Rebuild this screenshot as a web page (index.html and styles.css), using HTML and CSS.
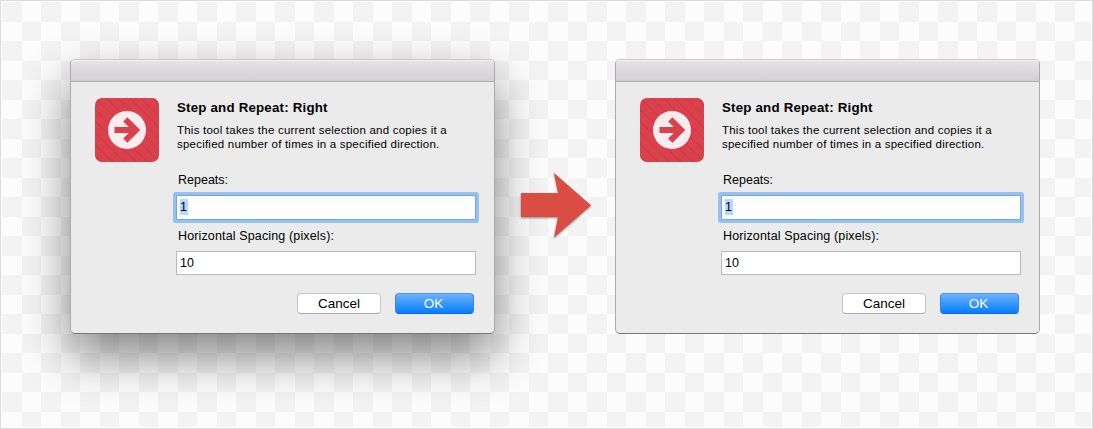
FILE: index.html
```html
<!DOCTYPE html>
<html lang="en">
<head>
<meta charset="utf-8">
<title>Step and Repeat</title>
<link rel="stylesheet" href="styles.css">
</head>
<body>
<svg width="0" height="0" class="defs">
  <defs>
    <pattern id="stripes" width="11.5" height="11.5" patternUnits="userSpaceOnUse">
      <path d="M-2 -2L13.5 13.5M-2 9.5L2 13.5M9.5 -2L13.5 2" stroke="#c83b46" stroke-width="1"/>
    </pattern>
    <symbol id="tool-icon" viewBox="0 0 64 64">
      <rect width="64" height="64" rx="7" fill="#da414c"/>
      <rect width="64" height="64" rx="7" fill="url(#stripes)"/>
      <circle cx="32" cy="32" r="19" fill="#fcecee"/>
      <path d="M19.5 32H40M30.3 21.3L41 32L30.3 42.7" fill="none" stroke="#da414c" stroke-width="6"/>
    </symbol>
  </defs>
</svg>
<main class="stage">
  <section class="dialog dialog-shadow">
    <div class="titlebar"></div>
    <div class="content">
      <svg class="icon" width="64" height="64"><use href="#tool-icon"/></svg>
      <div class="form">
        <h1 class="heading">Step and Repeat: Right</h1>
        <p class="desc">This tool takes the current selection and copies it a<br>specified number of times in a specified direction.</p>
        <div class="label repeats">Repeats:</div>
        <div class="field focused"><span class="selected">1</span></div>
        <div class="label spacing">Horizontal Spacing (pixels):</div>
        <div class="field">10</div>
        <div class="buttons"><div class="button cancel">Cancel</div><div class="button ok">OK</div></div>
      </div>
    </div>
  </section>
  <svg class="arrow" width="74" height="70" viewBox="0 0 74 70"><path d="M2 23H39L35 3L72 35.3L35 67.5L39 47H2Z" fill="#d94d43"/></svg>
  <section class="dialog">
    <div class="titlebar"></div>
    <div class="content">
      <svg class="icon" width="64" height="64"><use href="#tool-icon"/></svg>
      <div class="form">
        <h1 class="heading">Step and Repeat: Right</h1>
        <p class="desc">This tool takes the current selection and copies it a<br>specified number of times in a specified direction.</p>
        <div class="label repeats">Repeats:</div>
        <div class="field focused"><span class="selected">1</span></div>
        <div class="label spacing">Horizontal Spacing (pixels):</div>
        <div class="field">10</div>
        <div class="buttons"><div class="button cancel">Cancel</div><div class="button ok">OK</div></div>
      </div>
    </div>
  </section>
</main>
</body>
</html>
```
FILE: styles.css
```css
* { box-sizing: border-box; }
body { margin: 0; font-family: "Liberation Sans", Arial, sans-serif; color: #000; }
.defs { position: absolute; }
.stage {
  width: 1093px;
  height: 429px;
  border: 1px solid #dcdcdc;
  padding: 58px 0 0 69px;
  display: flex;
  align-items: flex-start;
  overflow: hidden;
  background:
    linear-gradient(#fff, #fff) 0 0 / 100% 1px no-repeat,
    linear-gradient(#fff, #fff) 0 0 / 1px 100% no-repeat,
    linear-gradient(#fff, #fff) 100% 0 / 1px 100% no-repeat,
    linear-gradient(#fff, #fff) 0 100% / 100% 1px no-repeat,
    conic-gradient(from 0deg at 20px 20px, #fcfcfc 25%, #f3f3f3 0 50%, #fcfcfc 0 75%, #f3f3f3 0) 1px 1px / 39px 39px;
}
.dialog {
  width: 425px;
  height: 275px;
  flex: none;
  border: 1px solid #aaa;
  border-top-color: #c8c8c8;
  border-bottom-color: #777;
  border-radius: 5px;
  background: #ebebeb;
}
.dialog-shadow { box-shadow: 0 22px 48px rgba(0, 0, 0, .47); }
.titlebar {
  height: 22px;
  border-top: 1px solid #f3f1f3;
  border-bottom: 1px solid #b3afb3;
  border-radius: 4px 4px 0 0;
  background: linear-gradient(#e6e2e6, #d4cfd4);
}
.content { display: flex; padding: 16px 0 0 24px; }
.icon { flex: none; }
.form { width: 306px; padding-left: 17px; }
.heading { margin: 2px 0 0 1px; font-size: 13.3px; line-height: 16px; letter-spacing: .2px; white-space: nowrap; }
.desc { margin: 7px 0 0 1px; font-size: 11.5px; line-height: 14px; letter-spacing: .22px; white-space: nowrap; }
.label { margin-left: 2px; font-size: 12.5px; line-height: 16px; white-space: nowrap; }
.repeats { margin-top: 21px; }
.spacing { margin-top: 8px; letter-spacing: .14px; }
.field {
  width: 300px;
  height: 24px;
  margin-top: 7px;
  padding: 3px 0 0 3px;
  border: 1px solid #b9b9b9;
  background: #fff;
  font-size: 12.5px;
  line-height: 16px;
}
.focused { height: 25px; border-color: #76a7d9; box-shadow: 0 0 0 3px #94c1f2; border-radius: 1px; }
.selected { display: inline-block; width: 8px; background: #b3d7ff; }
.buttons { display: flex; justify-content: flex-end; gap: 14px; width: 298px; margin-top: 18px; }
.button {
  height: 21px;
  border: 1px solid #c6c6c6;
  border-bottom-color: #aaa;
  border-radius: 4px;
  background: #fff;
  font-size: 13.5px;
  line-height: 19px;
  text-align: center;
}
.cancel { width: 84px; }
.ok { width: 79px; padding-right: 2px; color: #fff; border-color: #4a9af5 #2f87f2 #0a68e8; background: linear-gradient(#6cb3fb, #077dff); }
.arrow { flex: none; margin: 111px 22px 0 24px; filter: drop-shadow(0 1px 1px rgba(0, 0, 0, .45)); }
```
